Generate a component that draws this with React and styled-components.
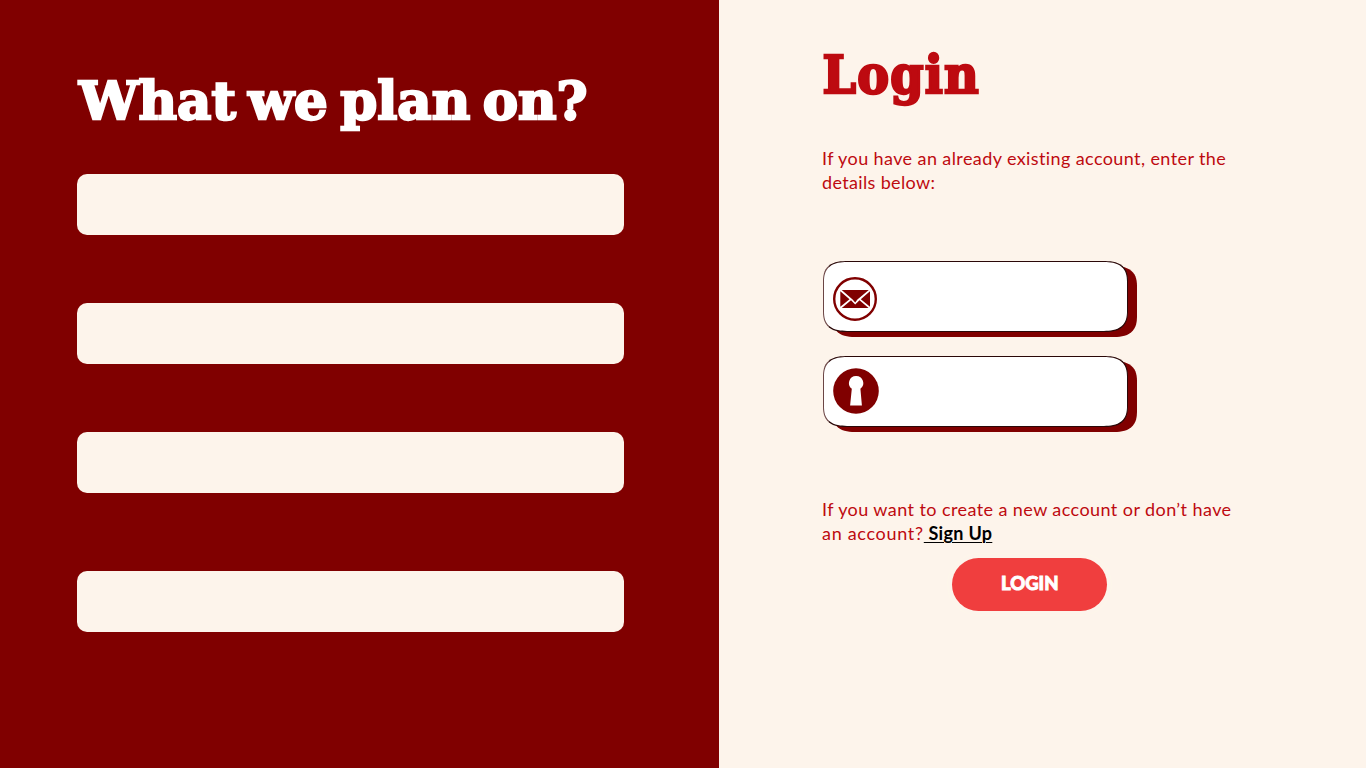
import React from "react";
import styled, { createGlobalStyle } from "styled-components";

const GlobalStyle = createGlobalStyle`
  * { box-sizing: border-box; }
  body { margin: 0; background: #fdf4eb; overflow: hidden; }
`;

const Page = styled.main`
  display: grid;
  grid-template-columns: 719px 1fr;
  width: 1366px;
  height: 768px;
`;

const PlanPanel = styled.section`
  background: #800000;
  padding: 69px 95px 0 77px;
`;

const LoginPanel = styled.section`
  background: #fdf4eb;
  padding: 43px 60px 0 103px;
`;

const Title = styled.h1`
  margin: 0;
  height: ${(p) => p.$height}px;
  padding-left: ${(p) => p.$inset}px;
  font: bold 53px/62px ${(p) => (p.$wide ? "" : '"DejaVu Serif Condensed", ')}"DejaVu Serif", serif;
  font-stretch: ${(p) => (p.$wide ? "normal" : "condensed")};
  letter-spacing: ${(p) => p.$spacing}px;
  word-spacing: -6px;
  color: ${(p) => p.$color};
  -webkit-text-stroke: 2.4px ${(p) => p.$color};
  stroke-linejoin: round;
  white-space: nowrap;
`;

const PlanList = styled.div`
  display: flex;
  flex-direction: column;
  gap: 67.6px;
`;

const PlanSlot = styled.div`
  height: 61.4px;
  border-radius: 10px;
  background: #fdf4eb;
  margin-top: ${(p) => p.$extra || 0}px;
`;

const Copy = styled.p`
  margin: 0;
  font: 400 18px/24px Lato, sans-serif;
  color: #bd0a10;
  white-space: nowrap;
`;

const Line = styled.span`
  display: block;
  letter-spacing: ${(p) => p.$spacing}px;
`;

const SignUp = styled.a`
  color: #000;
  font-weight: 700;
  text-decoration: underline;
  text-decoration-thickness: 1px;
  text-underline-offset: 2px;
  white-space: pre;
  letter-spacing: ${(p) => p.$spacing}px;
`;

const Fields = styled.div`
  display: flex;
  flex-direction: column;
  gap: 24px;
  margin: 67px 0 70px;
`;

const Field = styled.label`
  display: flex;
  align-items: flex-start;
  width: 305px;
  height: 71px;
  margin-left: 0.6px;
  padding: ${(p) => p.$top}px 0 0 9px;
  border: 1px solid #2a0808;
  border-left-color: #6b4545;
  border-radius: 25px / 21px;
  corner-shape: superellipse(1.4);
  background: #fff;
  box-shadow: 9px 5px 0 #800000;
`;

const LoginButton = styled.button`
  display: block;
  margin: 13px 0 0 130px;
  width: 155.4px;
  height: 53px;
  padding: 0 0 4px;
  border: 0;
  border-radius: 27px;
  background: #f03e3e;
  box-shadow: 0 0 0 4px #fdf4eb, 0 0 0 5px #fdf6ea;
  color: #fff;
  font: 900 18.5px/24px Lato, sans-serif;
  -webkit-text-stroke: 0.9px #fff;
`;

function MailIcon() {
  return (
    <svg width="44" height="44" viewBox="0 0 44 44" aria-hidden="true">
      <circle cx="22" cy="22" r="20.8" fill="#fff" stroke="#800000" strokeWidth="2.4" />
      <path fill="#800000" d="M8.7 13h27.1L24.4 22.6 22.2 25.6 19.6 22.6zM7.3 14.3l9.2 8-9.2 7.5zM37 14.3l-9.2 8 9.2 7.5zM8.8 31l9.2-7.8 4.2 4.3 4.3-4.3 9.1 7.8z" />
    </svg>
  );
}

function KeyholeIcon() {
  return (
    <svg width="46" height="46" viewBox="0 0 46 46" aria-hidden="true">
      <circle cx="23" cy="23" r="22.8" fill="#800000" />
      <path fill="#fff" d="M23 8a7.1 7.1 0 0 1 4.4 12.8l1.5 16.6H17.1l1.7-16.6A7.1 7.1 0 0 1 23 8z" />
    </svg>
  );
}

export default function App() {
  return (
    <>
      <GlobalStyle />
      <Page>
        <PlanPanel>
          <Title $wide $height={105} $color="#fff" $spacing={0} $inset={2}>What we plan on?</Title>
          <PlanList>
            <PlanSlot />
            <PlanSlot />
            <PlanSlot />
            <PlanSlot $extra={10} />
          </PlanList>
        </PlanPanel>
        <LoginPanel>
          <Title $height={103} $color="#bd0a10" $spacing={1.2} $inset={0.5}>Login</Title>
          <Copy>
            <Line $spacing={0.4}>If you have an already existing account, enter the</Line>
            <Line $spacing={0.35}>details below:</Line>
          </Copy>
          <Fields>
            <Field $top={15}><MailIcon /></Field>
            <Field $top={10.6}><KeyholeIcon /></Field>
          </Fields>
          <Copy>
            <Line $spacing={0.42}>If you want to create a new account or don’t have</Line>
            <Line $spacing={0.7}>an account?<SignUp $spacing={0.3}> Sign Up</SignUp></Line>
          </Copy>
          <LoginButton>LOGIN</LoginButton>
        </LoginPanel>
      </Page>
    </>
  );
}
